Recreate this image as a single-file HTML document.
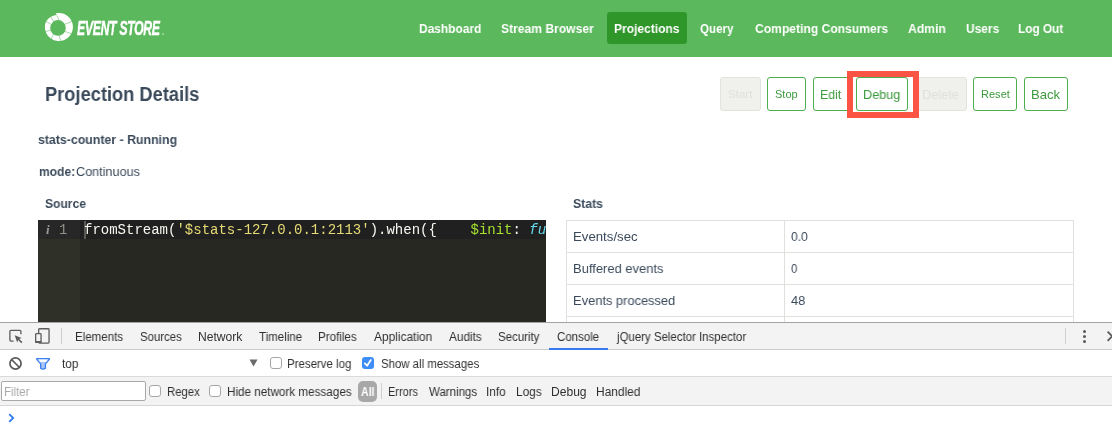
<!DOCTYPE html>
<html><head><meta charset="utf-8"><style>
html,body{margin:0;padding:0;width:1112px;height:440px;overflow:hidden;background:#fff}
.r{position:absolute}
.t{position:absolute;line-height:0;white-space:nowrap;transform-origin:0 0;will-change:transform}
</style></head><body>
<div class="r" style="left:0;top:0;width:1112px;height:57px;background:#5cb85c"></div>
<div class="r" style="left:607px;top:12px;width:80px;height:32px;background:#2f962a;border-radius:3px"></div>
<svg class="r" style="left:40px;top:8px" width="40" height="40" viewBox="0 0 40 40">
<path fill="#fff" fill-rule="evenodd" d="M15.75,5.36 L16.47,5.21 L17.19,5.10 L17.92,5.03 L18.66,5.00 L19.39,5.01 L20.12,5.05 L20.85,5.14 L21.57,5.26 L22.29,5.42 L22.99,5.61 L23.69,5.84 L24.37,6.11 L25.04,6.42 L25.69,6.76 L26.32,7.13 L26.93,7.53 L27.52,7.97 L28.08,8.43 L28.63,8.93 L29.14,9.45 L29.62,10.00 L30.08,10.57 L30.51,11.17 L30.90,11.79 L31.26,12.43 L31.59,13.08 L31.88,13.76 L32.14,14.44 L32.36,15.14 L32.54,15.85 L32.69,16.57 L32.80,17.29 L32.87,18.02 L32.90,18.76 L32.89,19.49 L32.85,20.22 L32.76,20.95 L32.64,21.67 L32.48,22.39 L32.29,23.09 L32.06,23.79 L31.79,24.47 L31.48,25.14 L31.14,25.79 L30.77,26.42 L30.37,27.03 L29.93,27.62 L29.47,28.18 L28.97,28.73 L28.45,29.24 L27.90,29.72 L27.33,30.18 L26.73,30.61 L26.11,31.00 L25.47,31.36 L24.82,31.69 L24.14,31.98 L23.46,32.24 L22.76,32.46 L22.05,32.64 L21.33,32.79 L20.61,32.90 L19.88,32.97 L19.14,33.00 L18.41,32.99 L17.68,32.95 L16.95,32.86 L16.23,32.74 L15.51,32.58 L14.81,32.39 L14.11,32.16 L13.43,31.89 L12.76,31.58 L12.11,31.24 L11.48,30.87 L10.87,30.47 L10.28,30.03 L9.72,29.57 L9.17,29.07 L8.66,28.55 L8.18,28.00 L7.72,27.43 L7.29,26.83 L6.90,26.21 L6.54,25.57 L6.21,24.92 L5.92,24.24 L5.66,23.56 L5.44,22.86 L5.26,22.15 L5.11,21.43 L5.00,20.71 L4.93,19.98 L4.90,19.24 L4.91,18.51 L4.95,17.78 L5.04,17.05 L5.16,16.33 L5.32,15.61 L5.51,14.91 L5.74,14.21 L5.74,14.21 L6.10,13.57 L6.50,12.95 L6.92,12.36 L7.37,11.79 L7.84,11.26 L8.34,10.75 L8.86,10.27 L9.40,9.83 L9.97,9.42 L10.54,9.04 L11.14,8.70 L11.74,8.39 L12.36,8.11 L12.98,7.87 L13.62,7.67 L14.25,7.50 L14.90,7.37 L15.54,7.27 L16.18,7.21 L16.82,7.18 Z M25.80,19.90 A7.8,7.8 0 1 0 10.20,19.90 A7.8,7.8 0 1 0 25.80,19.90 Z"/>
<g stroke="#5cb85c" stroke-width="0.55"><line x1="24.12" y1="16.51" x2="32.25" y2="13.33"/><line x1="24.18" y1="23.19" x2="31.70" y2="25.81"/><line x1="18.97" y1="26.83" x2="20.92" y2="33.36"/><line x1="13.89" y1="25.56" x2="11.00" y2="31.16"/><line x1="11.27" y1="21.83" x2="5.19" y2="23.72"/><line x1="11.76" y1="16.72" x2="5.65" y2="13.10"/><line x1="14.09" y1="14.10" x2="9.97" y2="7.57"/><line x1="17.0" y1="7.699999999999999" x2="19.200000000000003" y2="12.3"/></g>
</svg>
<div class="r" style="left:162px;top:33px;width:2px;height:2px;background:rgba(255,255,255,.45);border-radius:1px"></div>
<div class="r" style="left:720px;top:77px;width:39px;height:32px;border:1px solid #e2e3df;background:#f0f1ed;border-radius:3px"></div>
<div class="r" style="left:767px;top:77px;width:37px;height:32px;border:1px solid #4cae4c;background:#fff;border-radius:3px"></div>
<div class="r" style="left:813px;top:77px;width:36px;height:32px;border:1px solid #4cae4c;background:#fff;border-radius:3px"></div>
<div class="r" style="left:856px;top:77px;width:50px;height:32px;border:1px solid #4cae4c;background:#fff;border-radius:3px"></div>
<div class="r" style="left:913px;top:77px;width:52px;height:32px;border:1px solid #e2e3df;background:#f0f1ed;border-radius:3px"></div>
<div class="r" style="left:973px;top:77px;width:42px;height:32px;border:1px solid #4cae4c;background:#fff;border-radius:3px"></div>
<div class="r" style="left:1024px;top:77px;width:42px;height:32px;border:1px solid #4cae4c;background:#fff;border-radius:3px"></div>
<div class="r" style="left:566px;top:220px;width:506px;height:120px;border-left:1px solid #dfe2dc;border-right:1px solid #dfe2dc;border-top:1px solid #dfe2dc"></div>
<div class="r" style="left:566px;top:252px;width:508px;height:1px;background:#dfe2dc"></div>
<div class="r" style="left:566px;top:284px;width:508px;height:1px;background:#dfe2dc"></div>
<div class="r" style="left:566px;top:316px;width:508px;height:1px;background:#dfe2dc"></div>
<div class="r" style="left:784px;top:220px;width:1px;height:120px;background:#dfe2dc"></div>
<div class="r" style="left:38px;top:220px;width:508px;height:110px;background:#272822"></div>
<div class="r" style="left:38px;top:220px;width:42px;height:110px;background:#2f3129"></div>
<div class="r" style="left:80px;top:220px;width:466px;height:19px;background:#202020"></div>
<div class="r" style="left:38px;top:220px;width:42px;height:19px;background:#272727"></div>
<div class="r" style="left:84px;top:221px;width:2px;height:18px;background:#5a5a55"></div>
<div class="r" style="left:38px;top:220px;width:508px;height:19px;overflow:hidden"><div class="t" style="left:46.2px;top:10.149000000000001px;font-family:'Liberation Mono',monospace;font-size:14px;color:#f8f8f2"><span style="color:#f8f8f2">fromStream(</span><span style="color:#e6db74">'$stats-127.0.0.1:2113'</span><span style="color:#f8f8f2">).when({&nbsp;&nbsp;&nbsp;&nbsp;</span><span style="color:#a6e22e">$init</span><span style="color:#f8f8f2">:&nbsp;</span><span style="color:#66d9ef;font-style:italic">function</span></div></div>
<div class="t" style="left:59px;top:230.149px;font-family:'Liberation Mono',monospace;font-size:14px;color:#8f908a">1</div>
<div class="t" style="left:45.5px;top:229.9955px;font-family:'Liberation Serif',serif;font-style:italic;font-weight:bold;font-size:13px;color:#9a9a94">i</div>
<div class="r" style="left:847px;top:71px;width:60px;height:35px;border:6px solid #fc5444"></div>
<div class="r" style="left:0;top:322px;width:1112px;height:118px;background:#fff"></div>
<div class="r" style="left:0;top:322px;width:1112px;height:1px;background:#a3a3a3"></div>
<div class="r" style="left:0;top:323px;width:1112px;height:26px;background:#f3f3f3"></div>
<div class="r" style="left:0;top:349px;width:1112px;height:1px;background:#cccccc"></div>
<div class="r" style="left:549px;top:348px;width:59px;height:2px;background:#3879f2"></div>
<div class="r" style="left:0;top:376px;width:1112px;height:1px;background:#dadada"></div>
<div class="r" style="left:0;top:377px;width:1112px;height:28px;background:#f3f3f3"></div>
<div class="r" style="left:0;top:405px;width:1112px;height:1px;background:#d6d6d6"></div>
<div class="r" style="left:61px;top:328px;width:1px;height:16px;background:#cfcfcf"></div>
<div class="r" style="left:1065px;top:328px;width:1px;height:16px;background:#cfcfcf"></div>
<svg class="r" style="left:8px;top:328px" width="16" height="16" viewBox="0 0 16 16">
<path d="M5.6 13.1H2.9Q1.9 13.1 1.9 12.1V3.3Q1.9 2.3 2.9 2.3H11.9Q12.9 2.3 12.9 3.3V6.2" fill="none" stroke="#5c5c5c" stroke-width="1.3"/>
<path d="M6.7 7.3L13.6 9.9L11.2 10.9L14.4 14.1L13.3 15.2L10.1 12L9.2 14.4Z" fill="#5c5c5c"/>
</svg>
<svg class="r" style="left:34px;top:327px" width="18" height="18" viewBox="0 0 18 18">
<rect x="4.65" y="1.75" width="10.4" height="14.4" rx="0.8" fill="none" stroke="#5c5c5c" stroke-width="1.3"/>
<rect x="1.65" y="6.65" width="5.4" height="8.7" rx="0.8" fill="#f3f3f3" stroke="#5c5c5c" stroke-width="1.3"/>
<rect x="1.2" y="14" width="6.3" height="1.9" fill="#5c5c5c"/>
</svg>
<div class="r" style="left:1083.1px;top:330.1px;width:3px;height:3px;border-radius:50%;background:#5a5a5a"></div>
<div class="r" style="left:1083.1px;top:334.9px;width:3px;height:3px;border-radius:50%;background:#5a5a5a"></div>
<div class="r" style="left:1083.1px;top:339.7px;width:3px;height:3px;border-radius:50%;background:#5a5a5a"></div>
<svg class="r" style="left:1104px;top:330px" width="16" height="13" viewBox="0 0 16 13">
<path d="M3.6 1.6L12.8 10.8M12.8 1.6L3.6 10.8" stroke="#5c5c5c" stroke-width="1.9"/></svg>
<svg class="r" style="left:8px;top:356px" width="15" height="15" viewBox="0 0 15 15">
<circle cx="7.5" cy="7.5" r="5.6" fill="none" stroke="#5a5a5a" stroke-width="1.7"/>
<line x1="3.5" y1="3.5" x2="11.5" y2="11.5" stroke="#5a5a5a" stroke-width="1.7"/></svg>
<svg class="r" style="left:35px;top:357px" width="16" height="14" viewBox="0 0 16 14">
<path d="M1.75 1.65H14.35V2.3L10.45 6.9V11.3Q8.05 13.1 5.65 11.3V6.9L1.75 2.3Z" fill="#a9c7f6" stroke="#3b80f0" stroke-width="1.3" stroke-linejoin="round"/>
<path d="M3.3 2.6H12.8L11 4.9H5.1Z" fill="#fff"/>
</svg>
<svg class="r" style="left:249px;top:359px" width="9" height="8" viewBox="0 0 9 8"><path d="M0.5 0.5H8.5L4.5 7.5Z" fill="#6a6a6a"/></svg>
<div class="r" style="left:270px;top:357px;width:10px;height:10px;border-radius:3px;border:1px solid #a6a6a6;background:#fff"></div>
<div class="r" style="left:362px;top:357px;width:12px;height:12px;border-radius:3px;background:#3d8cf7"></div><svg class="r" style="left:362px;top:357px" width="12" height="12" viewBox="0 0 12 12"><path d="M2.9 6.4L5.1 8.7L8.8 3.1" fill="none" stroke="#fff" stroke-width="1.8" stroke-linecap="round" stroke-linejoin="round"/></svg>
<div class="r" style="left:149px;top:385px;width:10px;height:10px;border-radius:3px;border:1px solid #a6a6a6;background:#fff"></div>
<div class="r" style="left:209px;top:385px;width:10px;height:10px;border-radius:3px;border:1px solid #a6a6a6;background:#fff"></div>
<div class="r" style="left:1px;top:381px;width:143px;height:18px;border:1px solid #a9a9a9;border-radius:2px;background:#fff"></div>
<div class="r" style="left:358px;top:381px;width:19px;height:21px;border-radius:5px;background:#a8a8a8"></div>
<div class="r" style="left:381px;top:383px;width:1px;height:16px;background:#d0d0d0"></div>
<svg class="r" style="left:8px;top:413px" width="7" height="10" viewBox="0 0 7 10"><path d="M1.2 1.2L5.2 5L1.2 8.8" fill="none" stroke="#2f7cf0" stroke-width="1.8"/></svg>
<div class="t" style="left:418.6px;top:28.5px;font-family:'Liberation Sans', sans-serif;font-size:13px;font-weight:bold;font-style:normal;color:#fff;transform:scaleX(0.9176)">Dashboard</div>
<div class="t" style="left:500.8px;top:28.5px;font-family:'Liberation Sans', sans-serif;font-size:13px;font-weight:bold;font-style:normal;color:#fff;transform:scaleX(0.93)">Stream Browser</div>
<div class="t" style="left:614.3px;top:28.5px;font-family:'Liberation Sans', sans-serif;font-size:13px;font-weight:bold;font-style:normal;color:#fff;transform:scaleX(0.9254)">Projections</div>
<div class="t" style="left:700.4px;top:28.5px;font-family:'Liberation Sans', sans-serif;font-size:13px;font-weight:bold;font-style:normal;color:#fff;transform:scaleX(0.8947)">Query</div>
<div class="t" style="left:754.6px;top:28.5px;font-family:'Liberation Sans', sans-serif;font-size:13px;font-weight:bold;font-style:normal;color:#fff;transform:scaleX(0.9308)">Competing Consumers</div>
<div class="t" style="left:907.9px;top:28.5px;font-family:'Liberation Sans', sans-serif;font-size:13px;font-weight:bold;font-style:normal;color:#fff;transform:scaleX(0.935)">Admin</div>
<div class="t" style="left:965.5px;top:28.5px;font-family:'Liberation Sans', sans-serif;font-size:13px;font-weight:bold;font-style:normal;color:#fff;transform:scaleX(0.9194)">Users</div>
<div class="t" style="left:1018.4px;top:28.5px;font-family:'Liberation Sans', sans-serif;font-size:13px;font-weight:bold;font-style:normal;color:#fff;transform:scaleX(0.906)">Log Out</div>
<div class="t" style="left:77.2px;top:28.07px;font-family:'Liberation Sans', sans-serif;font-size:20px;font-weight:bold;font-style:italic;color:#fff;letter-spacing:-0.6px;-webkit-text-stroke:0.45px #fff;transform:scaleX(0.6154)">EVENT STORE</div>
<div class="t" style="left:44.59px;top:94.07px;font-family:'Liberation Sans', sans-serif;font-size:20px;font-weight:bold;font-style:normal;color:#3b4a5b;transform:scaleX(0.9137)">Projection Details</div>
<div class="t" style="left:38.0px;top:139.5px;font-family:'Liberation Sans', sans-serif;font-size:13px;font-weight:bold;font-style:normal;color:#3b4a5b;transform:scaleX(0.9486)">stats-counter - Running</div>
<div class="t" style="left:38.8px;top:171.5px;font-family:'Liberation Sans', sans-serif;font-size:13px;font-weight:bold;font-style:normal;color:#3b4a5b;transform:scaleX(0.9263)">mode:</div>
<div class="t" style="left:75.6px;top:171.5px;font-family:'Liberation Sans', sans-serif;font-size:13px;font-weight:normal;font-style:normal;color:#3b4a5b;transform:scaleX(0.9727)">Continuous</div>
<div class="t" style="left:44.7px;top:203.67px;font-family:'Liberation Sans', sans-serif;font-size:12.5px;font-weight:bold;font-style:normal;color:#3b4a5b;transform:scaleX(0.9667)">Source</div>
<div class="t" style="left:572.9px;top:203.67px;font-family:'Liberation Sans', sans-serif;font-size:12.5px;font-weight:bold;font-style:normal;color:#3b4a5b;transform:scaleX(0.98)">Stats</div>
<div class="t" style="left:572.58px;top:236.5px;font-family:'Liberation Sans', sans-serif;font-size:13px;font-weight:normal;font-style:normal;color:#3b4a5b;transform:scaleX(1.0161)">Events/sec</div>
<div class="t" style="left:572.5px;top:268.5px;font-family:'Liberation Sans', sans-serif;font-size:13px;font-weight:normal;font-style:normal;color:#3b4a5b;transform:scaleX(0.9956)">Buffered events</div>
<div class="t" style="left:572.51px;top:300.5px;font-family:'Liberation Sans', sans-serif;font-size:13px;font-weight:normal;font-style:normal;color:#3b4a5b;transform:scaleX(0.9902)">Events processed</div>
<div class="t" style="left:791.2px;top:236.5px;font-family:'Liberation Sans', sans-serif;font-size:13px;font-weight:normal;font-style:normal;color:#3b4a5b;transform:scaleX(0.9333)">0.0</div>
<div class="t" style="left:791.2px;top:268.5px;font-family:'Liberation Sans', sans-serif;font-size:13px;font-weight:normal;font-style:normal;color:#3b4a5b;transform:scaleX(0.8857)">0</div>
<div class="t" style="left:791.2px;top:300.5px;font-family:'Liberation Sans', sans-serif;font-size:13px;font-weight:normal;font-style:normal;color:#3b4a5b;transform:scaleX(0.9857)">48</div>
<div class="t" style="left:727.6px;top:94.19px;font-family:'Liberation Sans', sans-serif;font-size:11px;font-weight:normal;font-style:normal;color:#dfe0dc;transform:scaleX(1.05)">Start</div>
<div class="t" style="left:775.0px;top:94.19px;font-family:'Liberation Sans', sans-serif;font-size:11px;font-weight:normal;font-style:normal;color:#3c9a3c;transform:scaleX(1.0)">Stop</div>
<div class="t" style="left:819.85px;top:94.5px;font-family:'Liberation Sans', sans-serif;font-size:13px;font-weight:normal;font-style:normal;color:#3c9a3c;transform:scaleX(0.9455)">Edit</div>
<div class="t" style="left:863.32px;top:94.5px;font-family:'Liberation Sans', sans-serif;font-size:13px;font-weight:normal;font-style:normal;color:#3c9a3c;transform:scaleX(0.9757)">Debug</div>
<div class="t" style="left:922.32px;top:94.5px;font-family:'Liberation Sans', sans-serif;font-size:13px;font-weight:normal;font-style:normal;color:#dfe0dc;transform:scaleX(0.9833)">Delete</div>
<div class="t" style="left:980.7px;top:94.19px;font-family:'Liberation Sans', sans-serif;font-size:11px;font-weight:normal;font-style:normal;color:#3c9a3c;transform:scaleX(1.0034)">Reset</div>
<div class="t" style="left:1030.79px;top:94.5px;font-family:'Liberation Sans', sans-serif;font-size:13px;font-weight:normal;font-style:normal;color:#3c9a3c;transform:scaleX(1.0071)">Back</div>
<div class="t" style="left:75.44px;top:336.84px;font-family:'Liberation Sans', sans-serif;font-size:12px;font-weight:normal;font-style:normal;color:#303030;transform:scaleX(0.9612)">Elements</div>
<div class="t" style="left:140.1px;top:336.84px;font-family:'Liberation Sans', sans-serif;font-size:12px;font-weight:normal;font-style:normal;color:#303030;transform:scaleX(0.95)">Sources</div>
<div class="t" style="left:198.19px;top:336.84px;font-family:'Liberation Sans', sans-serif;font-size:12px;font-weight:normal;font-style:normal;color:#303030;transform:scaleX(1.0093)">Network</div>
<div class="t" style="left:259.0px;top:336.84px;font-family:'Liberation Sans', sans-serif;font-size:12px;font-weight:normal;font-style:normal;color:#303030;transform:scaleX(0.96)">Timeline</div>
<div class="t" style="left:318.03px;top:336.84px;font-family:'Liberation Sans', sans-serif;font-size:12px;font-weight:normal;font-style:normal;color:#303030;transform:scaleX(0.9667)">Profiles</div>
<div class="t" style="left:374.4px;top:336.84px;font-family:'Liberation Sans', sans-serif;font-size:12px;font-weight:normal;font-style:normal;color:#303030;transform:scaleX(0.9914)">Application</div>
<div class="t" style="left:449.2px;top:336.84px;font-family:'Liberation Sans', sans-serif;font-size:12px;font-weight:normal;font-style:normal;color:#303030;transform:scaleX(0.9818)">Audits</div>
<div class="t" style="left:497.8px;top:336.84px;font-family:'Liberation Sans', sans-serif;font-size:12px;font-weight:normal;font-style:normal;color:#303030;transform:scaleX(0.9568)">Security</div>
<div class="t" style="left:557.1px;top:336.84px;font-family:'Liberation Sans', sans-serif;font-size:12px;font-weight:normal;font-style:normal;color:#303030;transform:scaleX(0.9568)">Console</div>
<div class="t" style="left:617.05px;top:336.84px;font-family:'Liberation Sans', sans-serif;font-size:12px;font-weight:normal;font-style:normal;color:#303030;transform:scaleX(0.9533)">jQuery Selector Inspector</div>
<div class="t" style="left:62.3px;top:363.84px;font-family:'Liberation Sans', sans-serif;font-size:12px;font-weight:normal;font-style:normal;color:#303030;transform:scaleX(0.9824)">top</div>
<div class="t" style="left:287.34px;top:363.84px;font-family:'Liberation Sans', sans-serif;font-size:12px;font-weight:normal;font-style:normal;color:#303030;transform:scaleX(0.9561)">Preserve log</div>
<div class="t" style="left:380.5px;top:363.84px;font-family:'Liberation Sans', sans-serif;font-size:12px;font-weight:normal;font-style:normal;color:#303030;transform:scaleX(0.95)">Show all messages</div>
<div class="t" style="left:4.05px;top:391.84px;font-family:'Liberation Sans', sans-serif;font-size:12px;font-weight:normal;font-style:normal;color:#a8a8a8;transform:scaleX(0.95)">Filter</div>
<div class="t" style="left:166.56px;top:391.84px;font-family:'Liberation Sans', sans-serif;font-size:12px;font-weight:normal;font-style:normal;color:#303030;transform:scaleX(0.9441)">Regex</div>
<div class="t" style="left:226.93px;top:391.84px;font-family:'Liberation Sans', sans-serif;font-size:12px;font-weight:normal;font-style:normal;color:#303030;transform:scaleX(0.9732)">Hide network messages</div>
<div class="t" style="left:388.08px;top:391.84px;font-family:'Liberation Sans', sans-serif;font-size:12px;font-weight:normal;font-style:normal;color:#303030;transform:scaleX(0.9156)">Errors</div>
<div class="t" style="left:429.0px;top:391.84px;font-family:'Liberation Sans', sans-serif;font-size:12px;font-weight:normal;font-style:normal;color:#303030;transform:scaleX(0.958)">Warnings</div>
<div class="t" style="left:486.42px;top:391.84px;font-family:'Liberation Sans', sans-serif;font-size:12px;font-weight:normal;font-style:normal;color:#303030;transform:scaleX(0.9842)">Info</div>
<div class="t" style="left:515.71px;top:391.84px;font-family:'Liberation Sans', sans-serif;font-size:12px;font-weight:normal;font-style:normal;color:#303030;transform:scaleX(0.988)">Logs</div>
<div class="t" style="left:551.19px;top:391.84px;font-family:'Liberation Sans', sans-serif;font-size:12px;font-weight:normal;font-style:normal;color:#303030;transform:scaleX(1.0059)">Debug</div>
<div class="t" style="left:596.21px;top:391.84px;font-family:'Liberation Sans', sans-serif;font-size:12px;font-weight:normal;font-style:normal;color:#303030;transform:scaleX(0.993)">Handled</div>
<div class="t" style="left:361px;top:391.842px;font-family:'Liberation Sans';font-size:12px;font-weight:bold;color:#fff;transform:scaleX(0.88)">All</div>
</body></html>
